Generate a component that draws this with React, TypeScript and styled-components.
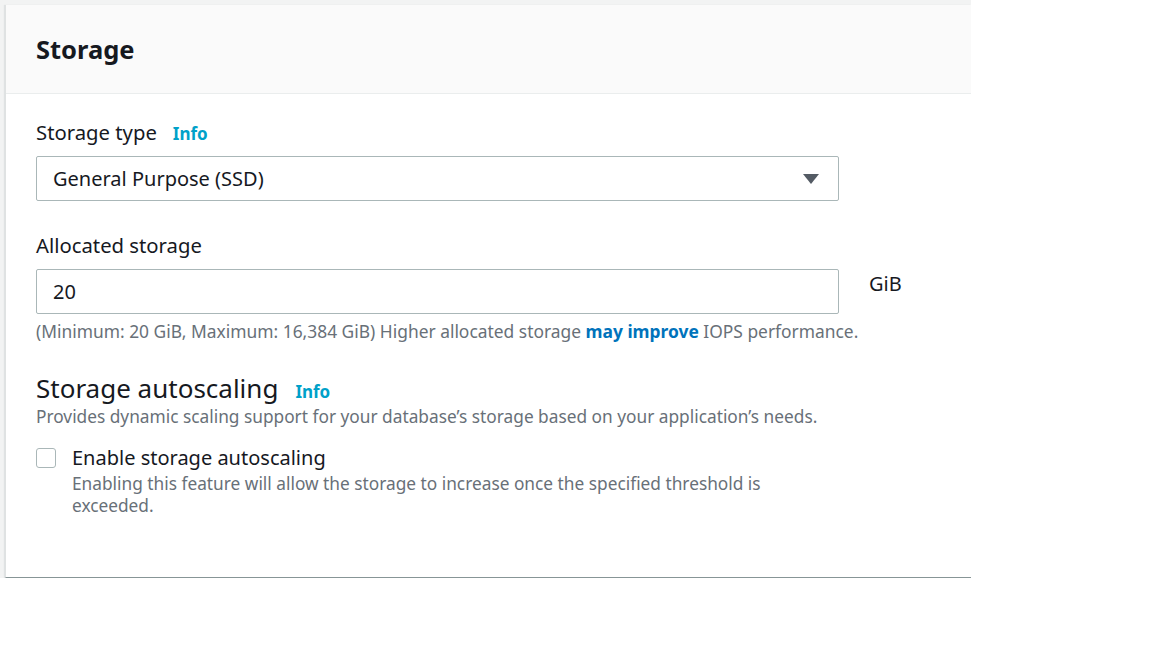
import React from "react";
import styled, { createGlobalStyle } from "styled-components";

const Global = createGlobalStyle`
  html, body { margin: 0; padding: 0; background: #ffffff; }
  body { font-family: "Noto Sans", "Open Sans", Arial, sans-serif; color: #16191f; }
`;

const Page = styled.div`
  width: 971px;
  padding-top: 5px;
  background: #f2f3f3;
`;

const Card = styled.section`
  margin-left: 5px;
  background: #ffffff;
  border-left: 1px solid #dfe2e2;
  border-bottom: 1px solid #879596;
  box-shadow: -1px 0 1px rgba(0, 28, 36, 0.08);
`;

const Header = styled.header`
  height: 88px;
  background: #fafafa;
  border-bottom: 1px solid #eaeded;
  display: flex;
  align-items: center;
  padding-left: 30px;
`;

const Title = styled.h2`
  margin: 0;
  font-size: 25.5px;
  font-weight: 700;
  line-height: 32px;
  color: #16191f;
`;

const Body = styled.div`
  padding: 24px 30px 60px 30px;
  display: flex;
  flex-direction: column;
`;

const Label = styled.div`
  font-size: 20.3px;
  line-height: 28px;
  color: #16191f;
  display: flex;
  align-items: baseline;
  gap: 16px;
`;

const InfoLink = styled.a`
  font-size: 17px;
  line-height: 20px;
  font-weight: 700;
  color: #00a1c9;
  text-decoration: none;
`;

const Field = styled.div<{ $top?: number }>`
  margin-top: ${(p) => p.$top ?? 0}px;
  display: flex;
  flex-direction: column;
`;

const Row = styled.div`
  display: flex;
  align-items: flex-start;
  margin-top: 10px;
`;

const Box = styled.div`
  display: flex;
  align-items: center;
  justify-content: space-between;
  padding: 0 19px 0 16px;
  box-sizing: border-box;
  width: 803px;
  height: 45px;
  border: 1px solid #aab7b8;
  border-radius: 2px;
  font-size: 20px;
  color: #16191f;
`;

const Caret = styled.span`
  width: 0;
  height: 0;
  border-left: 8px solid transparent;
  border-right: 8px solid transparent;
  border-top: 10px solid #545b64;
  margin-top: 1px;
`;

const Unit = styled.span`
  margin-left: 30px;
  font-size: 20px;
  line-height: 30px;
  color: #16191f;
`;

const Help = styled.div`
  margin-top: 5px;
  font-size: 17.4px;
  line-height: 24px;
  color: #687078;
`;

const HelpLink = styled.a`
  font-weight: 700;
  color: #0073bb;
  text-decoration: none;
`;

const SubHeading = styled.div`
  margin-top: 29px;
  display: flex;
  align-items: baseline;
  gap: 17px;
  font-size: 26px;
  line-height: 32px;
  color: #16191f;
`;

const Desc = styled.div`
  margin-top: 2px;
  font-size: 17.3px;
  line-height: 22px;
  color: #687078;
`;

const CheckRow = styled.label`
  margin-top: 17px;
  display: flex;
  align-items: flex-start;
  gap: 16px;
`;

const Check = styled.span`
  flex: none;
  width: 20px;
  height: 20px;
  box-sizing: border-box;
  border: 1px solid #aab7b8;
  border-radius: 3px;
  margin-top: 3px;
  background: #fff;
`;

const CheckText = styled.div`
  display: flex;
  flex-direction: column;
  width: 730px;
`;

const CheckTitle = styled.div`
  font-size: 20px;
  line-height: 26px;
  color: #16191f;
`;

const CheckDesc = styled.div`
  margin-top: 2px;
  font-size: 17.3px;
  line-height: 22px;
  color: #687078;
`;

export default function App() {
  return (
    <>
      <Global />
      <Page>
        <Card>
          <Header>
            <Title>Storage</Title>
          </Header>
          <Body>
            <Field>
              <Label>
                Storage type <InfoLink href="#">Info</InfoLink>
              </Label>
              <Row>
                <Box>
                  <span>General Purpose (SSD)</span>
                  <Caret />
                </Box>
              </Row>
            </Field>
            <Field $top={30}>
              <Label>Allocated storage</Label>
              <Row>
                <Box>
                  <span>20</span>
                </Box>
                <Unit>GiB</Unit>
              </Row>
              <Help>
                (Minimum: 20 GiB, Maximum: 16,384 GiB) Higher allocated storage{" "}
                <HelpLink href="#">may improve</HelpLink> IOPS performance.
              </Help>
            </Field>
            <SubHeading>
              Storage autoscaling <InfoLink href="#">Info</InfoLink>
            </SubHeading>
            <Desc>
              Provides dynamic scaling support for your database’s storage based on your application’s needs.
            </Desc>
            <CheckRow>
              <Check />
              <CheckText>
                <CheckTitle>Enable storage autoscaling</CheckTitle>
                <CheckDesc>
                  Enabling this feature will allow the storage to increase once the specified threshold is exceeded.
                </CheckDesc>
              </CheckText>
            </CheckRow>
          </Body>
        </Card>
      </Page>
    </>
  );
}
